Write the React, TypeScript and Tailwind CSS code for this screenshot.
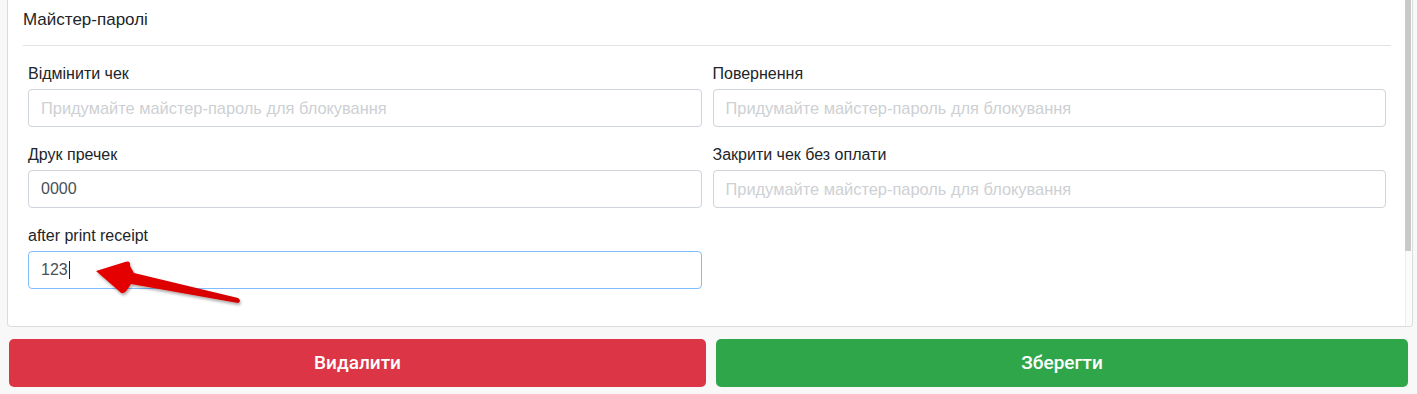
import React from 'react';

const PH = 'Придумайте майстер-пароль для блокування';

interface FieldProps {
  label: string;
  value?: string;
  focused?: boolean;
}

function Field({ label, value, focused }: FieldProps) {
  return (
    <div className="flex flex-col">
      <label className="text-[16px] leading-[22px] text-[#212529] mb-[4px]">{label}</label>
      <div
        className={
          focused
            ? 'h-[38px] rounded-[4px] border border-[#80bdff] bg-white px-[12px] flex items-center'
            : 'h-[38px] rounded-[4px] border border-[#ced4da] bg-white px-[12px] flex items-center'
        }
      >
        {value ? (
          <span className="text-[16px] text-[#495057] flex items-center">
            {value}
            {focused && <span className="inline-block w-px h-[18px] bg-[#222] ml-px" />}
          </span>
        ) : (
          <span className="text-[16.4px] text-[#cdd0d4]">{PH}</span>
        )}
      </div>
    </div>
  );
}

function Arrow() {
  return (
    <svg
      className="absolute left-0 top-0 pointer-events-none"
      width="1417"
      height="394"
      viewBox="0 0 1417 394"
    >
      <defs>
        <linearGradient id="ag" x1="0" y1="0" x2="1" y2="0">
          <stop offset="0" stopColor="#e60000" />
          <stop offset="1" stopColor="#d40000" />
        </linearGradient>
        <filter id="sh" x="-10%" y="-30%" width="130%" height="170%">
          <feDropShadow dx="1" dy="2" stdDeviation="1.5" floodColor="#000" floodOpacity="0.35" />
        </filter>
      </defs>
      <path
        d="M96 271 L125 262 Q131 260 130 266 L134 273 L238 298 Q242 301 238 303 L131 284 L127 290 Q123 296 119 291 Z"
        fill="url(#ag)"
        filter="url(#sh)"
      />
    </svg>
  );
}

export default function App() {
  return (
    <div
      className="relative w-[1417px] h-[394px] overflow-hidden bg-[#f8f8f8]"
      style={{ fontFamily: '"Helvetica Neue", "Liberation Sans", Arial, sans-serif' }}
    >
      <div className="ml-[7px] mr-[4px] h-[327px] bg-white border-x border-b border-[#dcdcdc] rounded-b-[4px] flex">
        <div className="flex-1 pl-[15px] pr-[14px] pt-[9px]">
          <div className="text-[17px] leading-[22px] text-[#212529]">Майстер-паролі</div>
          <div className="mt-[14px] border-t border-[#e3e3e3]" />
          <div className="mt-[17px] mx-[5px] grid grid-cols-2 gap-x-[11px] gap-y-[17px]">
            <Field label="Відмінити чек" />
            <Field label="Повернення" />
            <Field label="Друк пречек" value="0000" />
            <Field label="Закрити чек без оплати" />
            <Field label="after print receipt" value="123" focused />
          </div>
        </div>
        <div className="w-[6px] flex flex-col mr-px">
          <div className="h-[251px] bg-[#c9c9c9]" />
          <div className="flex-1 bg-[#fbfbfb] border-l border-[#eeeeee]" />
        </div>
      </div>
      <div className="mt-[12px] pl-[9px] pr-[9px] flex gap-[10px] font-['Roboto',sans-serif]">
        <button className="w-[697px] h-[48px] rounded-[5px] bg-[#dc3545] text-white text-[19px] font-medium">
          Видалити
        </button>
        <button className="flex-1 h-[48px] rounded-[5px] bg-[#30a64a] text-white text-[19px] font-medium">
          Зберегти
        </button>
      </div>
      <Arrow />
    </div>
  );
}
